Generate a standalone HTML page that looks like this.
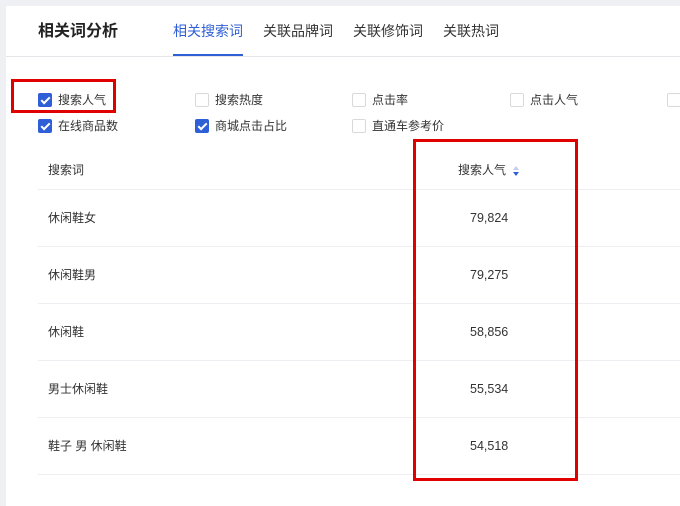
<!DOCTYPE html><html><head><meta charset="utf-8"><style>
body{margin:0;width:680px;height:494px;background:#eef0f4;font-family:"Liberation Sans","Noto Sans CJK SC",sans-serif;overflow:hidden;position:relative;color:#333}
.card{position:absolute;left:6px;top:6px;width:680px;height:500px;background:#fff}
.a{position:absolute;white-space:nowrap;line-height:16px}
.t{font-size:12px;color:#333}
.n{font-size:12.5px;color:#333}
.cb{position:absolute;width:12px;height:12px;border:1px solid #d9d9d9;border-radius:2px;background:#fff}
.cb.on{background:#2f5fd6;border-color:#2f5fd6}
.cb.on:after{content:"";position:absolute;left:4px;top:1px;width:3px;height:7px;border:solid #fff;border-width:0 2px 2px 0;transform:rotate(45deg)}
.ln{position:absolute;left:38px;width:642px;height:1px;background:#eceef2}
.red{position:absolute;border:3px solid #e00000;box-sizing:border-box}
</style></head><body><div class="card"></div>
<div class="a" style="left:38px;top:23px;font-size:16px;font-weight:bold;color:#222;line-height:18px">相关词分析</div>
<div class="a" style="left:173px;top:23px;font-size:14px;color:#2f5fd6">相关搜索词</div>
<div class="a" style="left:263px;top:23px;font-size:14px">关联品牌词</div>
<div class="a" style="left:353px;top:23px;font-size:14px">关联修饰词</div>
<div class="a" style="left:443px;top:23px;font-size:14px">关联热词</div>
<div style="position:absolute;left:6px;top:56px;width:674px;height:1px;background:#e4e6ea"></div>
<div style="position:absolute;left:173px;top:54px;width:70px;height:2px;background:#2f5fd6"></div>
<div class="cb on" style="left:38px;top:93px"></div><div class="a t" style="left:58px;top:92px">搜索人气</div>
<div class="cb" style="left:195px;top:93px"></div><div class="a t" style="left:215px;top:92px">搜索热度</div>
<div class="cb" style="left:352px;top:93px"></div><div class="a t" style="left:372px;top:92px">点击率</div>
<div class="cb" style="left:510px;top:93px"></div><div class="a t" style="left:530px;top:92px">点击人气</div>
<div class="cb" style="left:667px;top:93px"></div>
<div class="cb on" style="left:38px;top:119px"></div><div class="a t" style="left:58px;top:118px">在线商品数</div>
<div class="cb on" style="left:195px;top:119px"></div><div class="a t" style="left:215px;top:118px">商城点击占比</div>
<div class="cb" style="left:352px;top:119px"></div><div class="a t" style="left:372px;top:118px">直通车参考价</div>
<div class="a t" style="left:48px;top:162px">搜索词</div>
<div class="a t" style="left:458px;top:162px">搜索人气</div>
<svg style="position:absolute;left:512px;top:166px" width="8" height="10"><path d="M4 0L7 4H1Z" fill="#c3cdea"/><path d="M4 10L7 6H1Z" fill="#2f5fd6"/></svg>
<div class="ln" style="top:189px"></div><div class="ln" style="top:246px"></div><div class="ln" style="top:303px"></div><div class="ln" style="top:360px"></div><div class="ln" style="top:417px"></div><div class="ln" style="top:474px"></div>
<div class="a t" style="left:48px;top:210px">休闲鞋女</div><div class="a n" style="left:470px;top:210px">79,824</div>
<div class="a t" style="left:48px;top:267px">休闲鞋男</div><div class="a n" style="left:470px;top:267px">79,275</div>
<div class="a t" style="left:48px;top:324px">休闲鞋</div><div class="a n" style="left:470px;top:324px">58,856</div>
<div class="a t" style="left:48px;top:381px">男士休闲鞋</div><div class="a n" style="left:470px;top:381px">55,534</div>
<div class="a t" style="left:48px;top:438px">鞋子 男 休闲鞋</div><div class="a n" style="left:470px;top:438px">54,518</div>
<div class="red" style="left:11px;top:79px;width:105px;height:34px"></div>
<div class="red" style="left:413px;top:139px;width:165px;height:342px"></div>
</body></html>
